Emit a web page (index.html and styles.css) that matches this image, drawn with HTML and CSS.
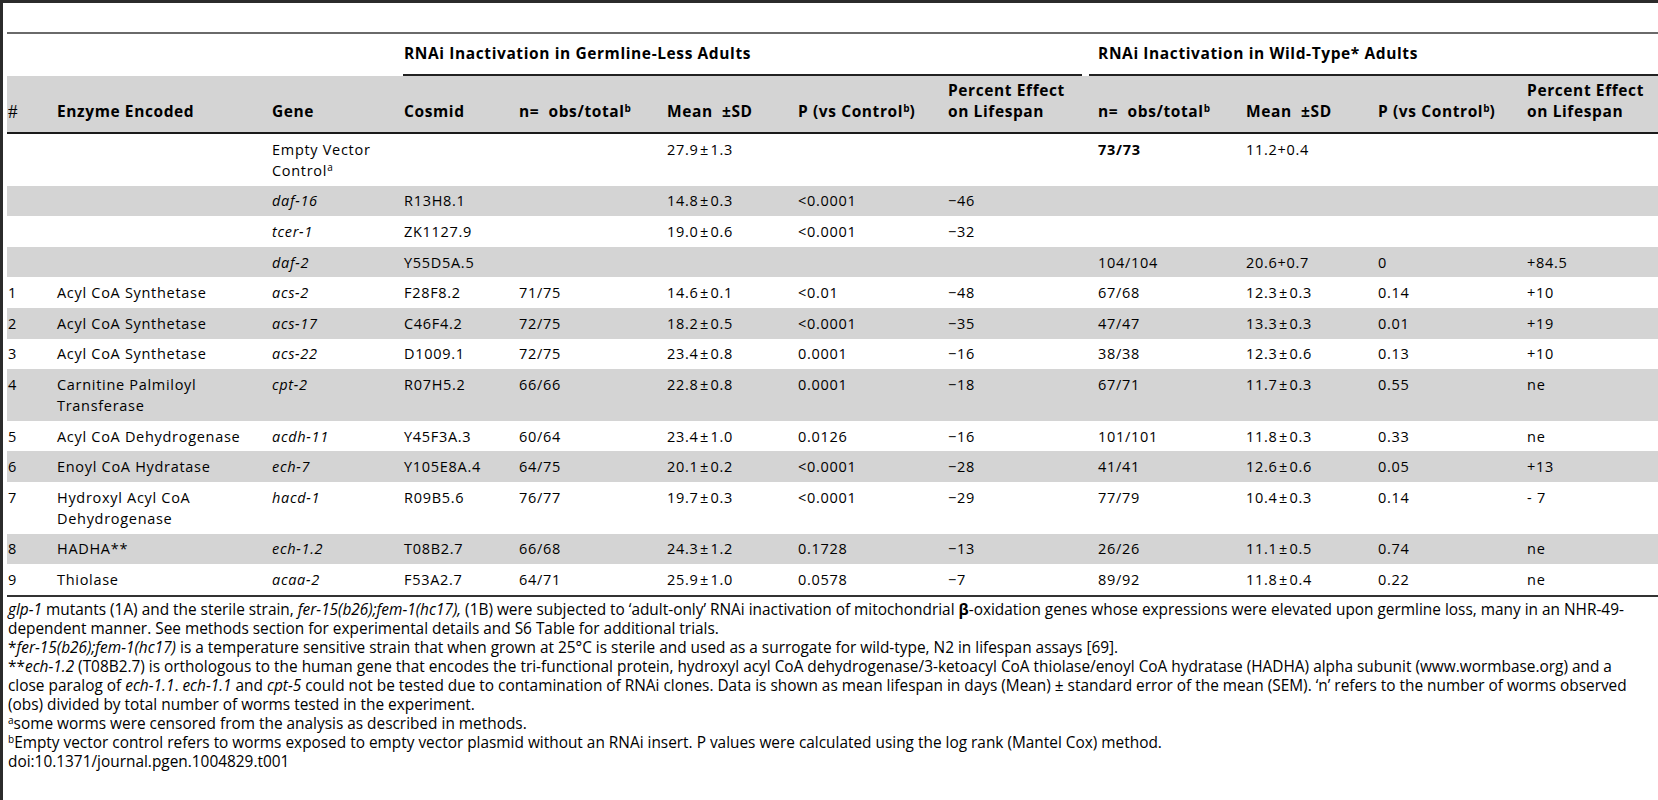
FILE: index.html
```html
<!DOCTYPE html>
<html lang="en">

<head>
    <meta charset="UTF-8">
    <meta name="viewport" content="width=device-width, initial-scale=1.0">
    <title>Table 1</title>
    <link rel="stylesheet" href="styles.css">
</head>

<body>
    <div class="frame">
        <table class="data">
            <colgroup>
                <col><col><col><col><col><col><col><col><col><col><col><col>
            </colgroup>
            <thead>
                <tr class="groups">
                    <th colspan="3"></th>
                    <th colspan="5"><div class="rule rule-first">RNAi Inactivation in Germline-Less Adults</div></th>
                    <th colspan="4"><div class="rule rule-second">RNAi Inactivation in Wild-Type* Adults</div></th>
                </tr>
                <tr class="heads">
                    <th class="hash">#</th>
                    <th>Enzyme Encoded</th>
                    <th>Gene</th>
                    <th>Cosmid</th>
                    <th>n=&nbsp; obs/total<sup>b</sup></th>
                    <th>Mean &nbsp;±SD</th>
                    <th>P (vs Control<sup>b</sup>)</th>
                    <th>Percent Effect<br>on Lifespan</th>
                    <th>n=&nbsp; obs/total<sup>b</sup></th>
                    <th>Mean &nbsp;±SD</th>
                    <th>P (vs Control<sup>b</sup>)</th>
                    <th>Percent Effect<br>on Lifespan</th>
                </tr>
            </thead>
            <tbody>
                <tr>
                    <td></td><td></td><td>Empty Vector<br>Control<sup>a</sup></td><td></td>
                    <td></td><td>27.9<span class="pm">±</span>1.3</td><td></td><td></td>
                    <td><b>73/73</b></td><td>11.2+0.4</td><td></td><td></td>
                </tr>
                <tr>
                    <td></td><td></td><td><i>daf-16</i></td><td>R13H8.1</td>
                    <td></td><td>14.8<span class="pm">±</span>0.3</td><td>&lt;0.0001</td><td>−46</td>
                    <td></td><td></td><td></td><td></td>
                </tr>
                <tr>
                    <td></td><td></td><td><i>tcer-1</i></td><td>ZK1127.9</td>
                    <td></td><td>19.0<span class="pm">±</span>0.6</td><td>&lt;0.0001</td><td>−32</td>
                    <td></td><td></td><td></td><td></td>
                </tr>
                <tr>
                    <td></td><td></td><td><i>daf-2</i></td><td>Y55D5A.5</td>
                    <td></td><td></td><td></td><td></td>
                    <td>104/104</td><td>20.6+0.7</td><td>0</td><td>+84.5</td>
                </tr>
                <tr>
                    <td>1</td><td>Acyl CoA Synthetase</td><td><i>acs-2</i></td><td>F28F8.2</td>
                    <td>71/75</td><td>14.6<span class="pm">±</span>0.1</td><td>&lt;0.01</td><td>−48</td>
                    <td>67/68</td><td>12.3<span class="pm">±</span>0.3</td><td>0.14</td><td>+10</td>
                </tr>
                <tr>
                    <td>2</td><td>Acyl CoA Synthetase</td><td><i>acs-17</i></td><td>C46F4.2</td>
                    <td>72/75</td><td>18.2<span class="pm">±</span>0.5</td><td>&lt;0.0001</td><td>−35</td>
                    <td>47/47</td><td>13.3<span class="pm">±</span>0.3</td><td>0.01</td><td>+19</td>
                </tr>
                <tr>
                    <td>3</td><td>Acyl CoA Synthetase</td><td><i>acs-22</i></td><td>D1009.1</td>
                    <td>72/75</td><td>23.4<span class="pm">±</span>0.8</td><td>0.0001</td><td>−16</td>
                    <td>38/38</td><td>12.3<span class="pm">±</span>0.6</td><td>0.13</td><td>+10</td>
                </tr>
                <tr>
                    <td>4</td><td>Carnitine Palmiloyl<br>Transferase</td><td><i>cpt-2</i></td><td>R07H5.2</td>
                    <td>66/66</td><td>22.8<span class="pm">±</span>0.8</td><td>0.0001</td><td>−18</td>
                    <td>67/71</td><td>11.7<span class="pm">±</span>0.3</td><td>0.55</td><td>ne</td>
                </tr>
                <tr>
                    <td>5</td><td>Acyl CoA Dehydrogenase</td><td><i>acdh-11</i></td><td>Y45F3A.3</td>
                    <td>60/64</td><td>23.4<span class="pm">±</span>1.0</td><td>0.0126</td><td>−16</td>
                    <td>101/101</td><td>11.8<span class="pm">±</span>0.3</td><td>0.33</td><td>ne</td>
                </tr>
                <tr>
                    <td>6</td><td>Enoyl CoA Hydratase</td><td><i>ech-7</i></td><td>Y105E8A.4</td>
                    <td>64/75</td><td>20.1<span class="pm">±</span>0.2</td><td>&lt;0.0001</td><td>−28</td>
                    <td>41/41</td><td>12.6<span class="pm">±</span>0.6</td><td>0.05</td><td>+13</td>
                </tr>
                <tr>
                    <td>7</td><td>Hydroxyl Acyl CoA<br>Dehydrogenase</td><td><i>hacd-1</i></td><td>R09B5.6</td>
                    <td>76/77</td><td>19.7<span class="pm">±</span>0.3</td><td>&lt;0.0001</td><td>−29</td>
                    <td>77/79</td><td>10.4<span class="pm">±</span>0.3</td><td>0.14</td><td>- 7</td>
                </tr>
                <tr>
                    <td>8</td><td>HADHA**</td><td><i>ech-1.2</i></td><td>T08B2.7</td>
                    <td>66/68</td><td>24.3<span class="pm">±</span>1.2</td><td>0.1728</td><td>−13</td>
                    <td>26/26</td><td>11.1<span class="pm">±</span>0.5</td><td>0.74</td><td>ne</td>
                </tr>
                <tr>
                    <td>9</td><td>Thiolase</td><td><i>acaa-2</i></td><td>F53A2.7</td>
                    <td>64/71</td><td>25.9<span class="pm">±</span>1.0</td><td>0.0578</td><td>−7</td>
                    <td>89/92</td><td>11.8<span class="pm">±</span>0.4</td><td>0.22</td><td>ne</td>
                </tr>
            </tbody>
        </table>

        <div class="notes">
            <p><i>glp-1</i> mutants (1A) and the sterile strain, <i>fer-15(b26);fem-1(hc17),</i> (1B) were subjected to ‘adult-only’ RNAi inactivation of mitochondrial <b>β</b>-oxidation genes whose expressions were elevated upon germline loss, many in an NHR-49-<br>dependent manner. See methods section for experimental details and S6 Table for additional trials.</p>
            <p>*<i>fer-15(b26);fem-1(hc17)</i> is a temperature sensitive strain that when grown at 25°C is sterile and used as a surrogate for wild-type, N2 in lifespan assays [69].</p>
            <p>**<i>ech-1.2</i> (T08B2.7) is orthologous to the human gene that encodes the tri-functional protein, hydroxyl acyl CoA dehydrogenase/3-ketoacyl CoA thiolase/enoyl CoA hydratase (HADHA) alpha subunit (www.wormbase.org) and a<br>close paralog of <i>ech-1.1</i>. <i>ech-1.1</i> and <i>cpt-5</i> could not be tested due to contamination of RNAi clones. Data is shown as mean lifespan in days (Mean) ± standard error of the mean (SEM). ‘n’ refers to the number of worms observed<br>(obs) divided by total number of worms tested in the experiment.</p>
            <p><sup>a</sup>some worms were censored from the analysis as described in methods.</p>
            <p><sup>b</sup>Empty vector control refers to worms exposed to empty vector plasmid without an RNAi insert. P values were calculated using the log rank (Mantel Cox) method.</p>
            <p>doi:10.1371/journal.pgen.1004829.t001</p>
        </div>
    </div>
</body>

</html>
```

FILE: styles.css
```css
body {
    margin: 0;
    background: #fff;
    color: #000;
    font-family: "Open Sans", "Liberation Sans", sans-serif;
    overflow: hidden;
}

.frame {
    height: 800px;
    box-sizing: border-box;
    border-top: 3px solid #2b2b2b;
    border-left: 3px solid #2b2b2b;
    padding: 29px 0 0 4px;
}

/* table */
.data {
    width: 1651px;
    table-layout: fixed;
    border-collapse: separate;
    border-spacing: 0;
    font-size: 14.5px;
    line-height: 21px;
}

.data col:nth-child(1) { width: 49px; }
.data col:nth-child(2) { width: 215px; }
.data col:nth-child(3) { width: 132px; }
.data col:nth-child(4) { width: 115px; }
.data col:nth-child(5) { width: 148px; }
.data col:nth-child(6) { width: 131px; }
.data col:nth-child(7) { width: 150px; }
.data col:nth-child(8) { width: 150px; }
.data col:nth-child(9) { width: 148px; }
.data col:nth-child(10) { width: 132px; }
.data col:nth-child(11) { width: 149px; }
.data col:nth-child(12) { width: 132px; }

.data th,
.data td {
    text-align: left;
    white-space: nowrap;
}

.groups th {
    padding: 0;
    border-top: 2px solid #6a6a6a;
    font-size: 15.5px;
    font-weight: 700;
    letter-spacing: 0.6px;
}

.rule {
    padding: 9px 0 10px 1px;
    border-bottom: 2px solid #222;
}

.rule-first {
    margin-right: 15px;
}

.rule-second {
    margin-left: -8px;
    padding-left: 9px;
}

.heads th {
    padding: 4px 0 10px 1px;
    vertical-align: bottom;
    background: #d4d4d4;
    border-bottom: 2px solid #1a1a1a;
    font-size: 15.5px;
    font-weight: 700;
    letter-spacing: 0.6px;
}

.heads .hash {
    font-family: "Liberation Serif", serif;
    font-weight: 400;
    font-size: 19px;
    letter-spacing: 0;
}

.data td {
    padding: 4.8px 0 4.8px 1px;
    vertical-align: top;
    letter-spacing: 0.7px;
}

.data tbody tr:nth-child(even) td {
    background: #d4d4d4;
}

.data tbody tr:last-child td {
    border-bottom: 2px solid #333;
}

.pm {
    margin: 0 1.5px;
}

sup {
    font-size: 10px;
    line-height: 0;
    vertical-align: 5px;
    letter-spacing: 0;
}

/* footnotes */
.notes {
    margin-top: 3px;
    padding-left: 1px;
    font-size: 15.4px;
    line-height: 19.1px;
    white-space: nowrap;
}

.notes p {
    margin: 0;
}
```
